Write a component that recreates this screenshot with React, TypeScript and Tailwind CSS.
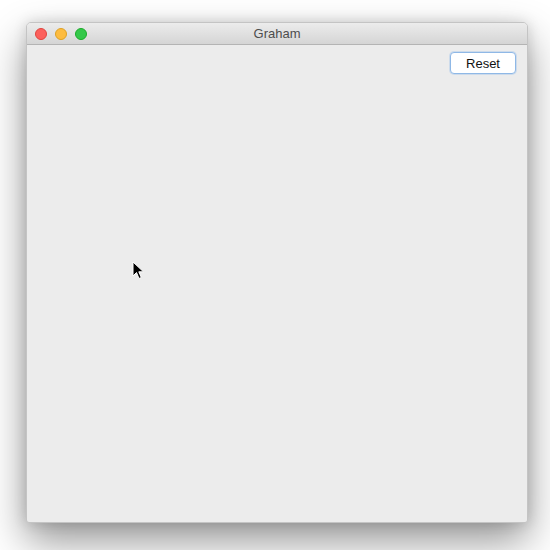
import React from 'react';

const TrafficLight: React.FC<{ className: string }> = ({ className }) => (
  <span className={`h-[12px] w-[12px] rounded-full border ${className}`} />
);

const Cursor: React.FC = () => (
  <svg viewBox="0 0 14 20" className="absolute left-[132px] top-[261px] h-[20px] w-[14px]" aria-hidden="true">
    <path d="M1 1 L1 15 L4.5 11.5 L7 17.5 L9.3 16.5 L6.8 10.8 L11.5 10.8 Z" fill="#000" stroke="#fff" strokeWidth="1" strokeLinejoin="round" />
  </svg>
);

export default function App() {
  return (
    <div className="relative h-[550px] w-[550px] overflow-hidden bg-white" style={{ fontFamily: '"Liberation Sans", Arial, sans-serif' }}>
      <div className="absolute left-[26px] top-[22px] flex h-[501px] w-[502px] flex-col overflow-hidden rounded-t-[5px] rounded-b-[3px] border border-[#c4c4c4] bg-[#ececec] shadow-[0_18px_40px_rgba(0,0,0,0.42),0_0_14px_rgba(0,0,0,0.14)]">
        <div className="relative flex h-[22px] shrink-0 items-center border-b border-[#b4b4b4] bg-gradient-to-b from-[#ececec] to-[#d5d5d5] px-[8px]">
          <div className="flex items-center gap-[8px]">
            <TrafficLight className="border-[#e0443e] bg-[#fc605c]" />
            <TrafficLight className="border-[#dea123] bg-[#fdbc40]" />
            <TrafficLight className="border-[#1aac29] bg-[#34c84a]" />
          </div>
          <span className="absolute inset-x-0 text-center text-[13px] text-[#4d4d4d]">Graham</span>
        </div>
        <div className="flex flex-1 justify-end pr-[11px] pt-[7px]">
          <button className="h-[22px] w-[66px] rounded-[4px] border border-[#8fb8e6] bg-white text-[13px] leading-none text-[#111] shadow-[0_0_0_1px_rgba(150,190,235,0.35)]">
            Reset
          </button>
        </div>
      </div>
      <Cursor />
    </div>
  );
}
